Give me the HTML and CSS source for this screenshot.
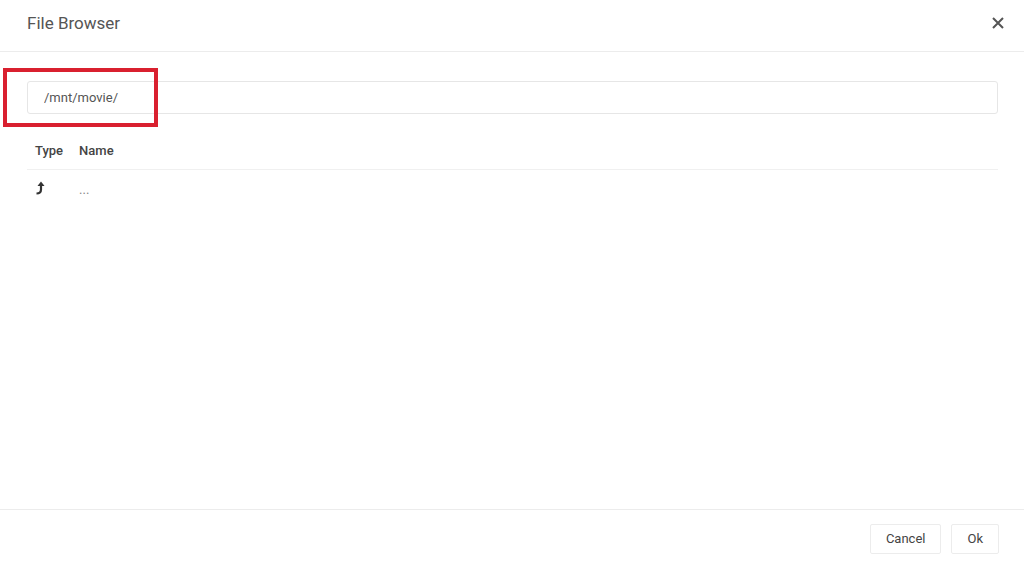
FILE: index.html
```html
<!DOCTYPE html>
<html lang="en">
<head>
    <meta charset="UTF-8">
    <title>File Browser</title>
    <link rel="stylesheet" href="styles.css">
</head>
<body>
    <div class="dialog">
        <div class="dialog-header">
            <span class="dialog-title">File Browser</span>
            <svg class="close-icon" width="12" height="12" viewBox="0 0 12 12">
                <path d="M1 1 L11 11 M11 1 L1 11" stroke="#555" stroke-width="2" fill="none"/>
            </svg>
        </div>

        <div class="dialog-body">
            <div class="path-wrap">
                <input type="text" class="path-input" value="/mnt/movie/">
                <div class="highlight"></div>
            </div>

            <table class="file-table">
                <thead>
                    <tr>
                        <th class="col-type">Type</th>
                        <th>Name</th>
                    </tr>
                </thead>
                <tbody>
                    <tr>
                        <td class="col-type">
                            <svg width="10" height="14" viewBox="0 0 10 14">
                                <path d="M1.5 12.5 Q6 12.5 6 8.5 V4" stroke="#333" stroke-width="2.2" fill="none"/>
                                <polygon points="6,0.5 9.5,5 2.5,5" fill="#333"/>
                            </svg>
                        </td>
                        <td class="dots">...</td>
                    </tr>
                </tbody>
            </table>
        </div>

        <div class="dialog-footer">
            <button class="btn">Cancel</button>
            <button class="btn">Ok</button>
        </div>
    </div>
</body>
</html>
```

FILE: styles.css
```css
body {
    margin: 0;
    padding: 0;
    background: #fff;
    font-family: Roboto, "Liberation Sans", sans-serif;
    color: #444;
}

.dialog {
    display: flex;
    flex-direction: column;
    height: 564px;
}

.dialog-header {
    height: 52px;
    border-bottom: 1px solid #ececec;
    box-sizing: border-box;
    display: flex;
    align-items: center;
    justify-content: space-between;
    padding: 0 20px 6px 27px;
}

.dialog-title {
    font-size: 17px;
    color: #555;
}

.dialog-body {
    flex: 1;
    padding: 29px 26px 0 27px;
}

.path-wrap {
    position: relative;
}

.path-input {
    width: 100%;
    box-sizing: border-box;
    height: 33px;
    border: 1px solid #e6e6e6;
    border-radius: 3px;
    padding: 0 16px;
    font-family: Roboto, "Liberation Sans", sans-serif;
    font-size: 13px;
    color: #555;
    outline: none;
}

.highlight {
    position: absolute;
    left: -24px;
    top: -13px;
    width: 147px;
    height: 51px;
    border: 4px solid #d9202f;
}

.file-table {
    width: 100%;
    border-collapse: collapse;
    margin-top: 18px;
    font-size: 13px;
}

.file-table th {
    text-align: left;
    font-weight: 500;
    color: #444;
    height: 37px;
    padding: 0 8px;
    border-bottom: 1px solid #f0f0f0;
}

.file-table td {
    height: 38px;
    padding: 0 8px;
}

.file-table .col-type {
    width: 26px;
}

.dots {
    color: #888;
}

.dialog-footer {
    height: 55px;
    border-top: 1px solid #ececec;
    box-sizing: border-box;
    display: flex;
    justify-content: flex-end;
    align-items: center;
    gap: 10px;
    padding: 3px 25px 0 0;
}

.btn {
    height: 30px;
    padding: 0 15px;
    background: #fff;
    border: 1px solid #ececec;
    border-radius: 2px;
    font-family: Roboto, "Liberation Sans", sans-serif;
    font-size: 13px;
    color: #444;
}
```
